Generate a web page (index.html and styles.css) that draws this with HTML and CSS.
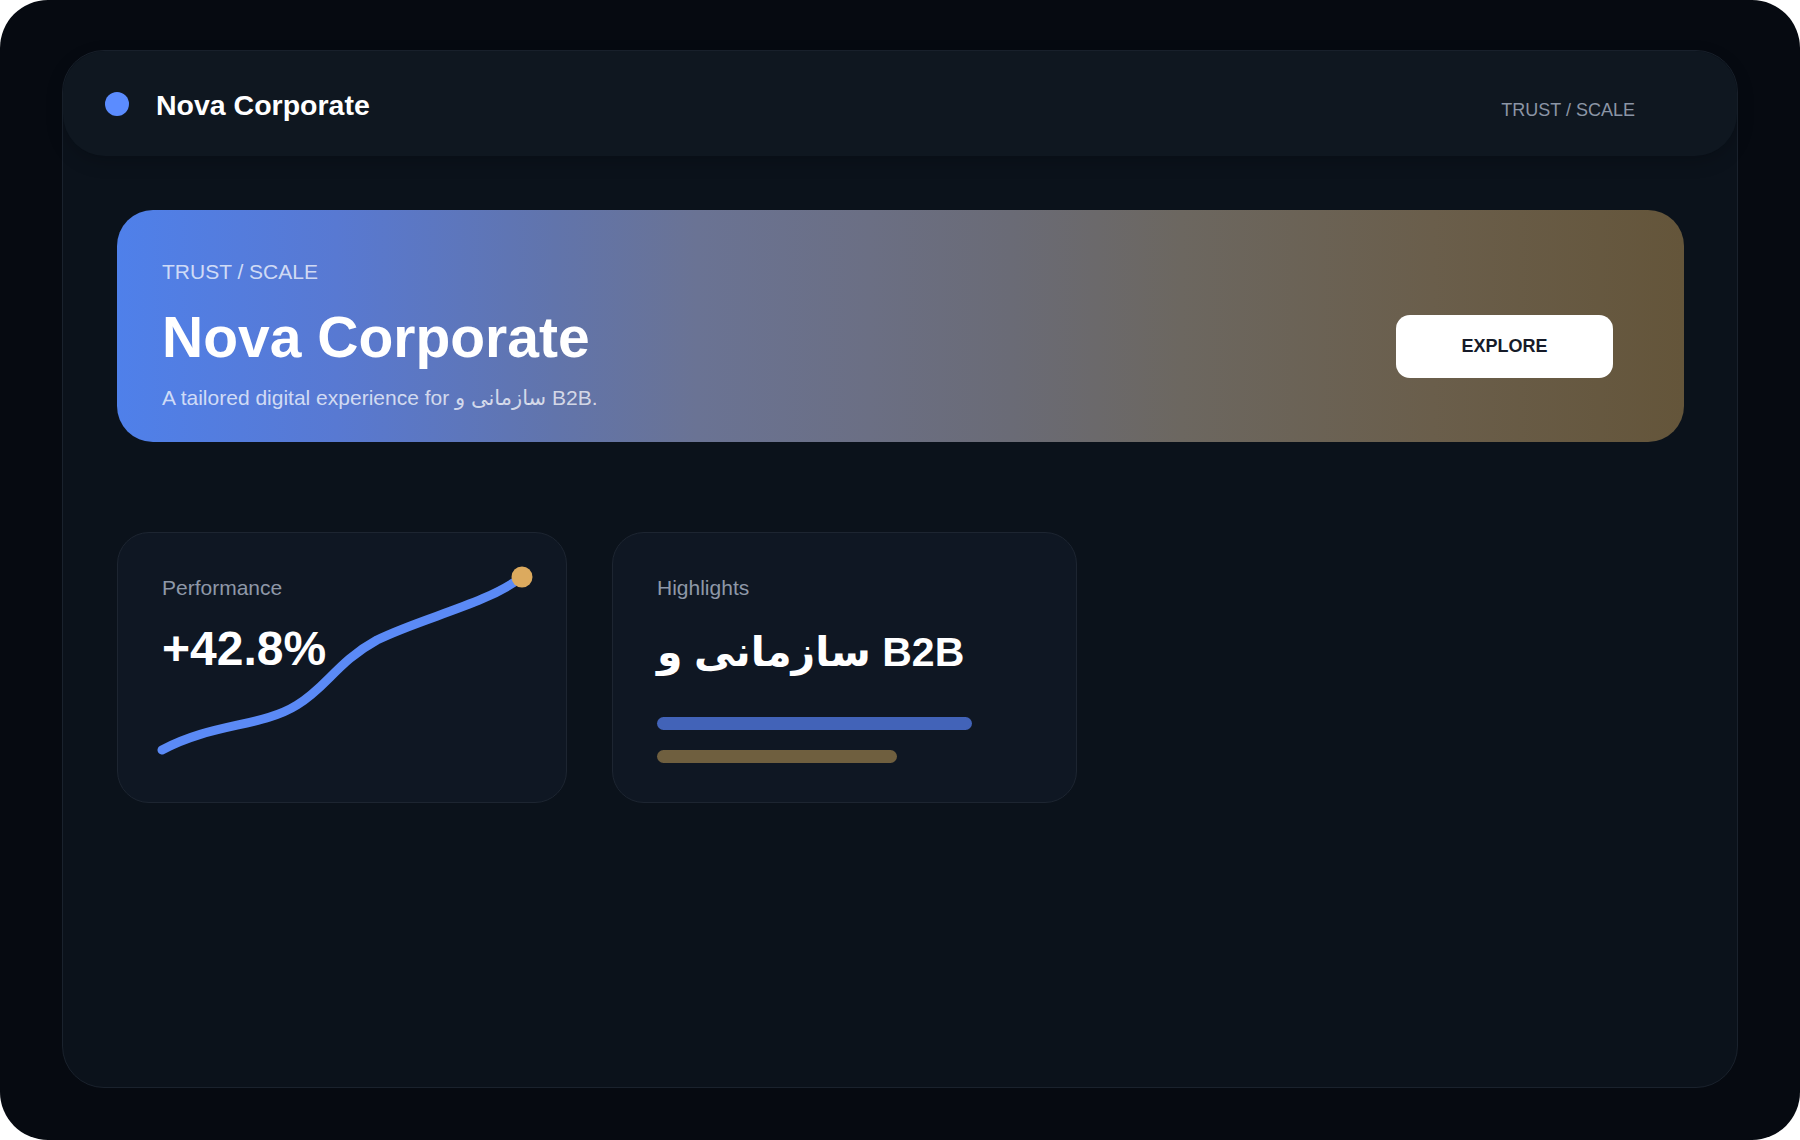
FILE: index.html
```html
<!DOCTYPE html>
<html lang="en">
<head>
<meta charset="utf-8">
<title>Nova Corporate</title>
<link rel="stylesheet" href="styles.css">
</head>
<body>
<div class="frame">
  <div class="panel">
    <header class="topbar">
      <div class="brand">
        <span class="brand-dot"></span>
        <span class="brand-name">Nova Corporate</span>
      </div>
      <nav class="topnav">TRUST / SCALE</nav>
    </header>
    <main class="content">
      <section class="hero">
        <div class="hero-text">
          <div class="hero-label">TRUST / SCALE</div>
          <h1 class="hero-title">Nova Corporate</h1>
          <p class="hero-sub">A tailored digital experience for سازمانی و B2B.</p>
        </div>
        <button class="hero-btn" type="button">EXPLORE</button>
      </section>
      <section class="cards">
        <article class="card card-perf">
          <div class="card-label">Performance</div>
          <div class="card-value">+42.8%</div>
          <svg class="chart" width="360" height="181" viewBox="0 0 360 181">
            <path d="M0 173 C 50 146, 100 150, 135 128 C 165 110, 175 85, 215 63 C 262 40, 322 28, 360 0" fill="none" stroke="#5b8af6" stroke-width="9" stroke-linecap="round"/>
            <circle cx="360" cy="0" r="10.5" fill="#dcaa5e"/>
          </svg>
        </article>
        <article class="card card-high">
          <div class="card-label">Highlights</div>
          <div class="card-title">سازمانی و B2B</div>
          <div class="bar bar-blue" style="width:84%"></div>
          <div class="bar bar-gold" style="width:64%"></div>
        </article>
      </section>
    </main>
  </div>
</div>
</body>
</html>
```

FILE: styles.css
```css
* { box-sizing: border-box; }

html, body {
  margin: 0;
  padding: 0;
  background: #ffffff;
}

body {
  font-family: "Liberation Sans", "DejaVu Sans", Arial, sans-serif;
  color: #ffffff;
}

.frame {
  width: 1800px;
  height: 1140px;
  border-radius: 48px;
  background: #060a11;
  padding: 50px 62px 52px 62px;
  display: flex;
}

.panel {
  flex: 1;
  display: flex;
  flex-direction: column;
  background: #0b121b;
  border: 1px solid #1a222d;
  border-radius: 42px;
}

.topbar {
  height: 105px;
  flex: 0 0 auto;
  display: flex;
  align-items: center;
  justify-content: space-between;
  padding: 0 102px 0 42px;
  background: #0f1720;
  border-radius: 42px;
  box-shadow: 0 6px 18px rgba(0, 0, 0, 0.18);
}

.brand {
  display: flex;
  align-items: center;
}

.brand-dot {
  width: 24px;
  height: 24px;
  border-radius: 50%;
  background: #5b8cff;
  margin-right: 27px;
}

.brand-name {
  font-size: 28.5px;
  font-weight: 700;
  color: #ffffff;
  margin-top: 3px;
}

.topnav {
  font-size: 18px;
  color: #8b95a5;
  margin-top: 13px;
}

.content {
  padding: 54px 53px 0 54px;
}

.hero {
  display: flex;
  align-items: flex-start;
  justify-content: space-between;
  padding: 48px 71px 30px 45px;
  border-radius: 36px;
  background: linear-gradient(90deg,
    #4f80ea 0%,
    #5879d2 14%,
    #6174ab 28%,
    #6a7394 37%,
    #6b6f84 48%,
    #6a6b76 57%,
    #6c6760 68%,
    #6a5e4b 84%,
    #64553a 100%);
}

.hero-label {
  font-size: 21px;
  line-height: 1.3;
  color: rgba(255, 255, 255, 0.74);
}

.hero-title {
  margin: 21px 0 0 0;
  font-size: 57px;
  line-height: 1.1;
  font-weight: 700;
  color: #ffffff;
}

.hero-sub {
  margin: 14px 0 0 0;
  font-size: 21px;
  line-height: 1.4;
  color: rgba(255, 255, 255, 0.74);
}

.hero-btn {
  margin-top: 57px;
  width: 217px;
  height: 63px;
  border: none;
  border-radius: 14px;
  background: #ffffff;
  color: #161b29;
  font-family: "Liberation Sans", Arial, sans-serif;
  font-size: 18px;
  font-weight: 700;
  cursor: pointer;
}

.cards {
  display: flex;
  gap: 45px;
  margin-top: 90px;
}

.card {
  position: relative;
  background: #0f1723;
  border: 1px solid #1d2531;
  border-radius: 32px;
  padding: 44px 44px 39px 44px;
}

.card-perf { width: 450px; }
.card-high { width: 465px; }

.card-label {
  font-size: 21px;
  line-height: 1;
  color: #8e98a8;
}

.card-value {
  margin-top: 25px;
  font-size: 48px;
  line-height: 1.1;
  font-weight: 700;
  color: #ffffff;
}

.chart {
  position: absolute;
  left: 44px;
  top: 44px;
  overflow: visible;
}

.card-title {
  margin-top: 31px;
  font-family: "Liberation Sans", "DejaVu Sans", sans-serif;
  font-size: 41px;
  line-height: 46px;
  font-weight: 700;
  color: #ffffff;
}

.bar {
  height: 13px;
  border-radius: 7px;
}

.bar-blue {
  margin-top: 42px;
  background: #4263b8;
}

.bar-gold {
  margin-top: 20px;
  background: #6f5f3f;
}
```
